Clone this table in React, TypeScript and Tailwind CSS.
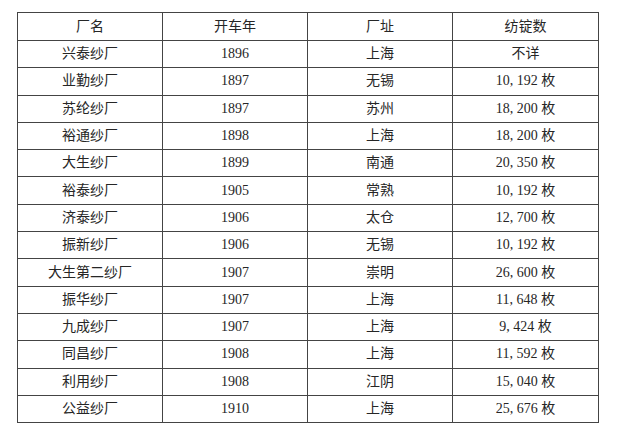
import React from "react";

const rows: [string, string, string, string][] = [
  ["兴泰纱厂", "1896", "上海", "不详"],
  ["业勤纱厂", "1897", "无锡", "10, 192 枚"],
  ["苏纶纱厂", "1897", "苏州", "18, 200 枚"],
  ["裕通纱厂", "1898", "上海", "18, 200 枚"],
  ["大生纱厂", "1899", "南通", "20, 350 枚"],
  ["裕泰纱厂", "1905", "常熟", "10, 192 枚"],
  ["济泰纱厂", "1906", "太仓", "12, 700 枚"],
  ["振新纱厂", "1906", "无锡", "10, 192 枚"],
  ["大生第二纱厂", "1907", "崇明", "26, 600 枚"],
  ["振华纱厂", "1907", "上海", "11, 648 枚"],
  ["九成纱厂", "1907", "上海", "9, 424 枚"],
  ["同昌纱厂", "1908", "上海", "11, 592 枚"],
  ["利用纱厂", "1908", "江阴", "15, 040 枚"],
  ["公益纱厂", "1910", "上海", "25, 676 枚"],
];

const font = "font-['Liberation_Serif','Noto_Sans_CJK_SC',serif]";

export default function App() {
  return (
    <div className={`w-[626px] h-[433px] bg-white overflow-hidden pt-[12px] pl-[17px] ${font} text-[#262626]`}>
      <table className="border-collapse table-fixed w-[581px] border-[1.5px] border-[#333]">
        <colgroup>
          <col className="w-[145px]" />
          <col className="w-[145px]" />
          <col className="w-[145px]" />
          <col className="w-[146px]" />
        </colgroup>
        <thead>
          <tr className="h-[28px]">
            {["厂名", "开车年", "厂址", "纺锭数"].map((h) => (
              <th key={h} className="border border-[#444] font-normal text-[14px] leading-none text-center p-0">
                {h}
              </th>
            ))}
          </tr>
        </thead>
        <tbody>
          {rows.map((r, i) => (
            <tr key={i} className="h-[27.3px]">
              {r.map((c, j) => (
                <td key={j} className="border border-[#444] text-[14px] leading-none text-center p-0 whitespace-pre">
                  {c}
                </td>
              ))}
            </tr>
          ))}
        </tbody>
      </table>
    </div>
  );
}
